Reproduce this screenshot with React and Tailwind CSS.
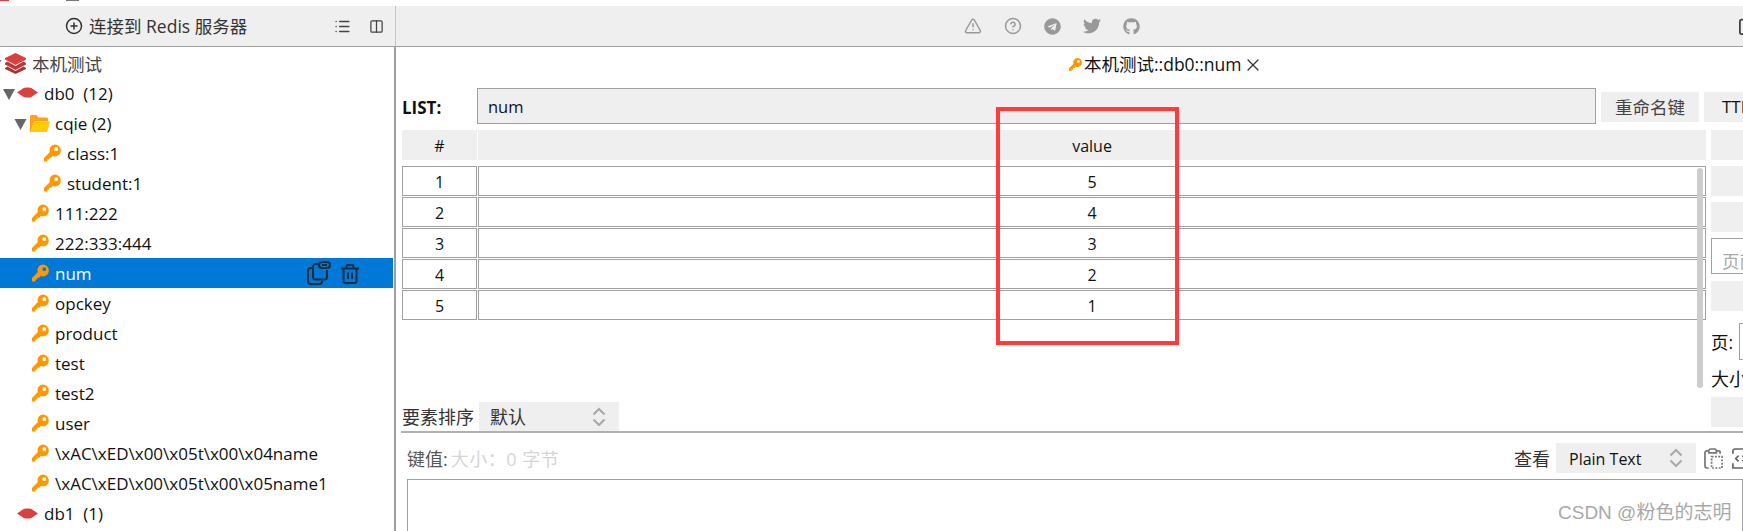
import { AlertTriangle, CircleHelp, CirclePlus, Columns2, List, X } from "lucide-react"
import { FaGithub, FaTelegram, FaTwitter } from "react-icons/fa"

const FONT = "font-['Open_Sans','Noto_Sans_CJK_SC',sans-serif]"

const KEY_ROWS = [
  { name: "class:1", nested: true },
  { name: "student:1", nested: true },
  { name: "111:222" },
  { name: "222:333:444" },
  { name: "num", active: true },
  { name: "opckey" },
  { name: "product" },
  { name: "test" },
  { name: "test2" },
  { name: "user" },
  { name: "\\xAC\\xED\\x00\\x05t\\x00\\x04name" },
  { name: "\\xAC\\xED\\x00\\x05t\\x00\\x05name1" },
]

const VALUES = ["5", "4", "3", "2", "1"]

function KeyIcon({ className }) {
  return (
    <svg viewBox="0 0 18 18" className={className} fill="#ff9800">
      <path
        fillRule="evenodd"
        d="M11.500 0a6.300 6.300 0 0 1 0 12.600c-.8 0-1.500-.1-2.200-.4L7.500 14H5.600v2H3.600v2H0v-3.800l6-6A6.300 6.300 0 0 1 11.500 0zm1.500 3a2 2 0 1 0 0 4 2 2 0 0 0 0-4z"
      />
    </svg>
  )
}

function DbIcon() {
  return (
    <svg viewBox="0 0 21 11" className="w-[21px] h-[11px]" fill="#d9413f">
      <path d="M0 5.500 7 .8Q10.500 0 14 .8L21 5.500 14 10.200Q10.500 11 7 10.200z" />
    </svg>
  )
}

function LayersIcon() {
  return (
    <svg viewBox="0 0 21 21" className="w-[21px] h-[21px]">
      <path d="M10.500 0 21 5 21 6.500 10.500 12 0 6.500 0 5z" fill="#d9413f" />
      <path d="M0 10l2.500-1.500 8 4.500 8-4.500L21 10v1.500L10.500 17 0 11.500z" fill="#b93a38" />
      <path d="M0 15l2.500-1.500 8 4.500 8-4.500L21 15v1L10.500 21 0 16z" fill="#a83432" />
    </svg>
  )
}

function FolderIcon() {
  return (
    <svg viewBox="0 0 21 17" className="w-[21px] h-[17px]">
      <path d="M1 17V1.500C1 .7 1.500 0 2.500 0h5l2 2.500h8c1 0 1.500.7 1.500 1.500v2H5L2 17z" fill="#ff9f1c" />
      <path d="M4.500 6.500H21L18 17H1.500z" fill="#ffcb05" />
    </svg>
  )
}

function Arrow({ className }) {
  return (
    <svg viewBox="0 0 12 11" className={className} fill="#666666">
      <path d="M0 0h12L6 11z" />
    </svg>
  )
}

function UpDown() {
  return (
    <svg viewBox="0 0 14 20" className="w-[14px] h-[20px]" fill="none" stroke="#a8a8a8" strokeWidth="2">
      <path d="M1.500 7.500 7 2l5.500 5.500M1.500 12.500 7 18l5.500-5.500" />
    </svg>
  )
}

function CopyLinkIcon() {
  return (
    <svg viewBox="0 0 24 24" className="w-[24px] h-[24px]" fill="none" stroke="#1f2d3d" strokeWidth="2" strokeLinejoin="round">
      <path d="M6 7H3.500A2.500 2.500 0 0 0 1 9.500v11A2.500 2.500 0 0 0 3.500 23h9a2.500 2.500 0 0 0 2.500-2.500V20" />
      <path d="M11 3H8.500A2.500 2.500 0 0 0 6 5.500V16a2.500 2.500 0 0 0 2.500 2.500h9A2.500 2.500 0 0 0 20 16V9" />
      <rect x="12" y="1" width="11" height="6" rx="3" />
      <path d="M15 4h5" />
    </svg>
  )
}

function TrashIcon() {
  return (
    <svg viewBox="0 0 18 20" className="w-[18px] h-[20px] mt-[2px]" fill="none" stroke="#1f2d3d" strokeWidth="2" strokeLinejoin="round">
      <path d="M0 4.500h18M5.500 4.500V2.500A1.500 1.500 0 0 1 7 1h4a1.500 1.500 0 0 1 1.500 1.500v2" />
      <path d="M2.500 4.500V17a2 2 0 0 0 2 2h9a2 2 0 0 0 2-2V4.500" />
      <path d="M7 8.500v6.500M11 8.500v6.500" />
    </svg>
  )
}

function KeyRow({ row }) {
  return (
    <div
      className={`flex items-center h-[30px] gap-[6px] w-[393px] ${row.nested ? "pl-[44px]" : "pl-[32px]"} ${
        row.active ? "bg-[#0078d7] text-white" : "text-[#111111]"
      }`}
    >
      <KeyIcon className="w-[17px] h-[18px] shrink-0" />
      <span className="whitespace-nowrap pt-[2px]">{row.name}</span>
      {row.active && (
        <div className="flex items-center gap-[10px] ml-auto mr-[34px]">
          <CopyLinkIcon />
          <TrashIcon />
        </div>
      )}
    </div>
  )
}

export default function App() {
  return (
    <div className={`relative w-[1743px] h-[531px] overflow-hidden bg-white text-[17px] text-[#111111] ${FONT}`}>
      <div className="absolute left-0 top-0 w-[9px] h-[1px] bg-[#d9413f]" />
      <div className="absolute left-[66px] top-0 w-[13px] h-[1px] bg-[#777777]" />

      <div className="h-[6px]" />

      {/* toolbar */}
      <div className="flex h-[41px] bg-[#efefef] border-b border-[#a0a0a0]">
        <div className="flex items-center w-[396px] shrink-0 border-r border-[#c8c8c8] pl-[65px] text-[#333333]">
          <CirclePlus className="w-[18px] h-[18px] text-[#333333]" strokeWidth={2} />
          <span className="ml-[6px] whitespace-nowrap text-[17.500px]">连接到 Redis 服务器</span>
          <List className="w-[17px] h-[17px] ml-[87px] text-[#444444]" strokeWidth={2} />
          <Columns2 className="w-[15px] h-[15px] ml-[18px] text-[#444444]" strokeWidth={2} />
        </div>
        <div className="flex items-center pl-[567px] gap-[20px] text-[#999999]">
          <AlertTriangle className="w-[20px] h-[18px]" strokeWidth={2} />
          <CircleHelp className="w-[18px] h-[18px] mx-[1px]" strokeWidth={2} />
          <FaTelegram className="w-[17px] h-[17px] mx-[1px]" />
          <FaTwitter className="w-[18px] h-[18px] mx-[1px]" />
          <FaGithub className="w-[17px] h-[17px] mx-[1px]" />
          <svg viewBox="0 0 20 20" className="w-[18px] h-[18px] ml-[578px] shrink-0" fill="none" stroke="#444444" strokeWidth="2">
            <rect x="1" y="3" width="16" height="16" rx="2" />
            <path d="M6 2h6v3H6zM5 9h8M5 13h6" />
          </svg>
        </div>
      </div>

      <div className="flex h-[484px]">
        {/* tree */}
        <div className="w-[396px] shrink-0 border-r-2 border-[#a0a0a0] pt-[1px] overflow-hidden">
          <div className="relative flex items-center h-[30px] pl-[5px] gap-[6px] text-[#444444]">
            <Arrow className="absolute left-[-9px] top-[12px] w-[12px] h-[8px]" />
            <LayersIcon />
            <span className="whitespace-nowrap text-[17.500px] pt-[2px]">本机测试</span>
          </div>
          <div className="flex items-center h-[30px] pl-[3px]">
            <Arrow className="w-[12px] h-[11px] mt-[2px]" />
            <span className="ml-[2px] mt-[-2px]"><DbIcon /></span>
            <span className="ml-[6px] whitespace-pre pt-[2px]">db0  (12)</span>
          </div>
          <div className="flex items-center h-[30px] pl-[14px]">
            <Arrow className="w-[13px] h-[11px] mt-[2px]" />
            <span className="ml-[2px]"><FolderIcon /></span>
            <span className="ml-[5px] whitespace-pre pt-[2px]">cqie (2)</span>
          </div>
          {KEY_ROWS.map((row) => (
            <KeyRow key={row.name} row={row} />
          ))}
          <div className="flex items-center h-[30px] pl-[17px]">
            <DbIcon />
            <span className="ml-[6px] whitespace-pre pt-[2px]">db1  (1)</span>
          </div>
        </div>

        {/* detail */}
        <div className="w-[1347px] shrink-0 overflow-hidden">
          <div className="flex items-center h-[41px] pl-[673px] pb-[6px]">
            <KeyIcon className="w-[13px] h-[13px] shrink-0" />
            <span className="ml-[2px] whitespace-nowrap text-[17.500px]">本机测试::db0::num</span>
            <X className="w-[20px] h-[20px] ml-[2px] text-[#333333]" strokeWidth={1.500} />
          </div>

          <div className="flex h-[36px] pl-[6px]">
            <span className="w-[75px] shrink-0 self-center font-bold text-[17px] mt-[4px]">LIST:</span>
            <div className="flex items-center w-[1119px] shrink-0 bg-[#efefef] border border-[#a0a0a0] pl-[10px] pt-[2px] text-[16.500px]">num</div>
            <div className="flex items-center justify-center w-[98px] shrink-0 h-[30px] mt-[4px] ml-[5px] bg-[#efefef] text-[#444444] text-[17.500px]">重命名键</div>
            <div className="flex items-center w-[60px] shrink-0 h-[30px] mt-[4px] ml-[5px] bg-[#efefef] pl-[18px]">TTL</div>
          </div>

          <div className="flex h-[301px] mt-[6px] pl-[6px]">
            <div className="relative w-[1304px] shrink-0 text-[16px]">
              <div className="flex gap-[1px] h-[30px]">
                <div className="flex items-center justify-center w-[75px] bg-[#efefef] pt-[2px]">#</div>
                <div className="flex items-center justify-center flex-1 bg-[#efefef] pt-[2px]">value</div>
              </div>
              <div className="flex flex-col gap-[1px] mt-[6px]">
                {VALUES.map((value, index) => (
                  <div key={index} className="flex gap-[1px] h-[30px]">
                    <div className="flex items-center justify-center w-[75px] border border-[#a0a0a0] pt-[2px]">{index + 1}</div>
                    <div className="flex items-center justify-center flex-1 border border-[#a0a0a0] pt-[2px]">{value}</div>
                  </div>
                ))}
              </div>
              <div className="absolute right-[3px] top-[38px] w-[6px] h-[220px] rounded-[3px] bg-[#cdcdcd]" />
              <div className="flex items-center h-[29px] mt-[82px]">
                <span className="w-[77px] shrink-0 text-[#333333] whitespace-nowrap text-[18px] pt-[2px]">要素排序</span>
                <div className="flex items-center justify-between w-[140px] h-full bg-[#efefef] pl-[11px] pr-[13px] text-[#333333] text-[18px]">
                  <span className="pt-[2px]">默认</span>
                  <UpDown />
                </div>
              </div>
            </div>
            <div className="flex flex-col w-[60px] shrink-0 ml-[5px] text-[16px]">
              <div className="h-[30px] shrink-0 bg-[#efefef]" />
              <div className="h-[30px] shrink-0 mt-[6px] bg-[#efefef]" />
              <div className="h-[30px] shrink-0 mt-[6px] bg-[#efefef]" />
              <div className="flex items-center h-[36px] shrink-0 mt-[6px] border border-[#a0a0a0] pl-[10px] pt-[10px] text-[#aaaaaa] whitespace-nowrap text-[17.500px]">页面</div>
              <div className="h-[30px] shrink-0 mt-[7px] bg-[#efefef]" />
              <div className="flex items-center h-[37px] shrink-0 mt-[12px] whitespace-nowrap text-[17.500px]">
                <span className="w-[28px] shrink-0 pt-[2px]">页:</span>
                <div className="w-[30px] h-full shrink-0 border border-[#a0a0a0]" />
              </div>
              <div className="flex items-center h-[37px] shrink-0 whitespace-nowrap text-[18px] pt-[2px]">大小</div>
              <div className="h-[30px] shrink-0 bg-[#efefef]" />
            </div>
          </div>

          <div className="h-[2px] bg-[#b0b0b0] ml-[5px]" />

          <div className="flex items-center h-[46px] pl-[11px] text-[18px]">
            <span className="text-[#555555] pt-[6px]">键值:</span>
            <span className="ml-[3px] text-[#d5d5d5] whitespace-pre pt-[6px] tracking-[0.5px]">大小：0 字节</span>
            <span className="ml-auto text-[#333333] pt-[6px]">查看</span>
            <div className="flex items-center justify-between w-[140px] h-[30px] mt-[4px] ml-[6px] bg-[#efefef] pl-[13px] pr-[13px] text-[16px]">
              <span className="pt-[2px]">Plain Text</span>
              <UpDown />
            </div>
            <svg viewBox="0 0 20 22" className="w-[19px] h-[21px] mt-[4px] ml-[8px] mr-[8px] shrink-0" fill="none" stroke="#777777" strokeWidth="1.800">
              <path d="M5 3H3a2 2 0 0 0-2 2v14a2 2 0 0 0 2 2h2" />
              <path d="M5 3a2 2 0 0 1 2-2h4a2 2 0 0 1 2 2v2H5zM13 3h2a2 2 0 0 1 2 2v1" />
              <path d="M8 9h11v12H8z" strokeDasharray="2 1.500" />
            </svg>
            <svg viewBox="0 0 20 22" className="w-[19px] h-[21px] mt-[4px] mr-[-7px] shrink-0" fill="none" stroke="#666666" strokeWidth="1.800">
              <path d="M2 6V3a2 2 0 0 1 2-2h9l5 5M2 16v5h16v-5" />
              <path d="M8 8l-3 3 3 3M12 8l3 3-3 3" />
            </svg>
          </div>

          <div className="h-[60px] ml-[11px] border border-[#a0a0a0]" />
        </div>
      </div>

      {/* screenshot annotation and watermark */}
      <div className="absolute left-[996px] top-[107px] w-[183px] h-[238px] border-[4px] border-[#ff3b3b]" />
      <div className="absolute left-[1558px] top-[499px] text-[19px] text-[#a8a8a8] whitespace-nowrap font-['Liberation_Sans','Noto_Sans_CJK_SC',sans-serif]">
        CSDN @粉色的志明
      </div>
    </div>
  )
}
